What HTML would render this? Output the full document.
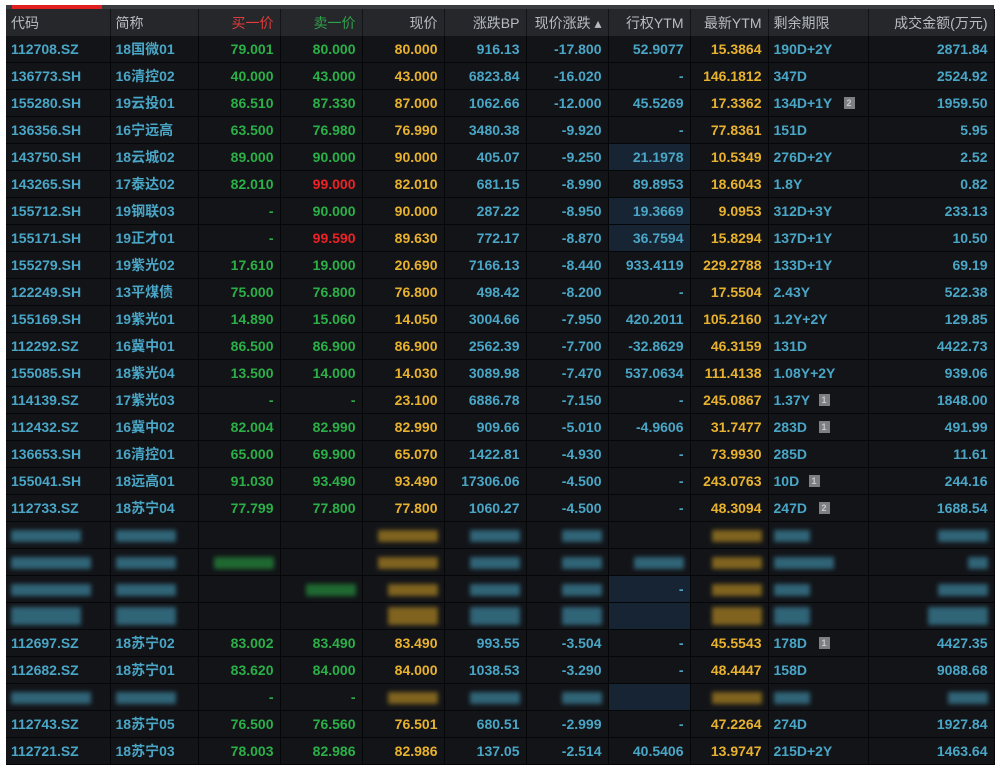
<!DOCTYPE html>
<html><head><meta charset="utf-8"><style>
body{margin:0;width:1000px;height:774px;background:#fff;overflow:hidden;position:relative;font-family:"Liberation Sans","Noto Sans CJK SC",sans-serif;}
#top{position:absolute;left:6px;top:5px;width:988px;height:4px;background:#3a3c40}
#red{position:absolute;left:12px;top:5px;width:90px;height:4px;background:#e0201f}
table{position:absolute;left:6px;top:9px;width:988px;border-collapse:collapse;table-layout:fixed;background:#121418}
th{height:27px;background:#25272b;color:#b8bcc2;font-weight:normal;font-size:14px;text-align:right;padding:0 6px 0 4px;border-right:1px solid #121418;white-space:nowrap}
td{height:26px;border-bottom:1px solid #050607;border-right:1px solid #050607;font-size:14px;font-weight:bold;text-align:right;padding:0 6px 0 4px;color:#4aa6c6;white-space:nowrap;overflow:hidden;position:relative}
th.l,td.l{text-align:left;padding-left:5px;padding-right:0}
.g{color:#2bb047}.y{color:#e9b22e}.r{color:#ee2224}.hr{color:#e33b3b}.hg{color:#2fa24a}
.b{display:inline-block;width:11px;height:12px;background:#7d7f83;color:#c8c8c8;font-size:9px;line-height:12px;text-align:center;position:absolute;left:50px;top:7px;font-weight:bold}
.hl{background:#172433}
.bl span{display:inline-block;height:12px;vertical-align:middle;opacity:.55;filter:blur(2.5px)}
.sb{background:#4aa6c6}.sy{background:#d9a526}.sg{background:#2bb047}
</style></head><body>
<div id="top"></div><div id="red"></div>
<table>
<colgroup><col style="width:104px"><col style="width:88px"><col style="width:82px"><col style="width:82px"><col style="width:82px"><col style="width:82px"><col style="width:82px"><col style="width:82px"><col style="width:78px"><col style="width:100px"><col style="width:126px"></colgroup>
<tr><th class="l">代码</th><th class="l">简称</th><th class="hr">买一价</th><th class="hg">卖一价</th><th>现价</th><th>涨跌BP</th><th>现价涨跌 ▴</th><th>行权YTM</th><th>最新YTM</th><th class="l">剩余期限</th><th>成交金额(万元)</th></tr>
<tr><td class="l">112708.SZ</td><td class="l">18国微01</td><td class="g">79.001</td><td class="g">80.000</td><td class="y">80.000</td><td>916.13</td><td>-17.800</td><td>52.9077</td><td class="y">15.3864</td><td class="l">190D+2Y</td><td>2871.84</td></tr>
<tr><td class="l">136773.SH</td><td class="l">16清控02</td><td class="g">40.000</td><td class="g">43.000</td><td class="y">43.000</td><td>6823.84</td><td>-16.020</td><td>-</td><td class="y">146.1812</td><td class="l">347D</td><td>2524.92</td></tr>
<tr><td class="l">155280.SH</td><td class="l">19云投01</td><td class="g">86.510</td><td class="g">87.330</td><td class="y">87.000</td><td>1062.66</td><td>-12.000</td><td>45.5269</td><td class="y">17.3362</td><td class="l">134D+1Y<span class="b" style="left:75px">2</span></td><td>1959.50</td></tr>
<tr><td class="l">136356.SH</td><td class="l">16宁远高</td><td class="g">63.500</td><td class="g">76.980</td><td class="y">76.990</td><td>3480.38</td><td>-9.920</td><td>-</td><td class="y">77.8361</td><td class="l">151D</td><td>5.95</td></tr>
<tr><td class="l">143750.SH</td><td class="l">18云城02</td><td class="g">89.000</td><td class="g">90.000</td><td class="y">90.000</td><td>405.07</td><td>-9.250</td><td class="hl">21.1978</td><td class="y">10.5349</td><td class="l">276D+2Y</td><td>2.52</td></tr>
<tr><td class="l">143265.SH</td><td class="l">17泰达02</td><td class="g">82.010</td><td class="r">99.000</td><td class="y">82.010</td><td>681.15</td><td>-8.990</td><td>89.8953</td><td class="y">18.6043</td><td class="l">1.8Y</td><td>0.82</td></tr>
<tr><td class="l">155712.SH</td><td class="l">19钢联03</td><td class="g">-</td><td class="g">90.000</td><td class="y">90.000</td><td>287.22</td><td>-8.950</td><td class="hl">19.3669</td><td class="y">9.0953</td><td class="l">312D+3Y</td><td>233.13</td></tr>
<tr><td class="l">155171.SH</td><td class="l">19正才01</td><td class="g">-</td><td class="r">99.590</td><td class="y">89.630</td><td>772.17</td><td>-8.870</td><td class="hl">36.7594</td><td class="y">15.8294</td><td class="l">137D+1Y</td><td>10.50</td></tr>
<tr><td class="l">155279.SH</td><td class="l">19紫光02</td><td class="g">17.610</td><td class="g">19.000</td><td class="y">20.690</td><td>7166.13</td><td>-8.440</td><td>933.4119</td><td class="y">229.2788</td><td class="l">133D+1Y</td><td>69.19</td></tr>
<tr><td class="l">122249.SH</td><td class="l">13平煤债</td><td class="g">75.000</td><td class="g">76.800</td><td class="y">76.800</td><td>498.42</td><td>-8.200</td><td>-</td><td class="y">17.5504</td><td class="l">2.43Y</td><td>522.38</td></tr>
<tr><td class="l">155169.SH</td><td class="l">19紫光01</td><td class="g">14.890</td><td class="g">15.060</td><td class="y">14.050</td><td>3004.66</td><td>-7.950</td><td>420.2011</td><td class="y">105.2160</td><td class="l">1.2Y+2Y</td><td>129.85</td></tr>
<tr><td class="l">112292.SZ</td><td class="l">16冀中01</td><td class="g">86.500</td><td class="g">86.900</td><td class="y">86.900</td><td>2562.39</td><td>-7.700</td><td>-32.8629</td><td class="y">46.3159</td><td class="l">131D</td><td>4422.73</td></tr>
<tr><td class="l">155085.SH</td><td class="l">18紫光04</td><td class="g">13.500</td><td class="g">14.000</td><td class="y">14.030</td><td>3089.98</td><td>-7.470</td><td>537.0634</td><td class="y">111.4138</td><td class="l">1.08Y+2Y</td><td>939.06</td></tr>
<tr><td class="l">114139.SZ</td><td class="l">17紫光03</td><td class="g">-</td><td class="g">-</td><td class="y">23.100</td><td>6886.78</td><td>-7.150</td><td>-</td><td class="y">245.0867</td><td class="l">1.37Y<span class="b">1</span></td><td>1848.00</td></tr>
<tr><td class="l">112432.SZ</td><td class="l">16冀中02</td><td class="g">82.004</td><td class="g">82.990</td><td class="y">82.990</td><td>909.66</td><td>-5.010</td><td>-4.9606</td><td class="y">31.7477</td><td class="l">283D<span class="b">1</span></td><td>491.99</td></tr>
<tr><td class="l">136653.SH</td><td class="l">16清控01</td><td class="g">65.000</td><td class="g">69.900</td><td class="y">65.070</td><td>1422.81</td><td>-4.930</td><td>-</td><td class="y">73.9930</td><td class="l">285D</td><td>11.61</td></tr>
<tr><td class="l">155041.SH</td><td class="l">18远高01</td><td class="g">91.030</td><td class="g">93.490</td><td class="y">93.490</td><td>17306.06</td><td>-4.500</td><td>-</td><td class="y">243.0763</td><td class="l">10D<span class="b" style="left:40px">1</span></td><td>244.16</td></tr>
<tr><td class="l">112733.SZ</td><td class="l">18苏宁04</td><td class="g">77.799</td><td class="g">77.800</td><td class="y">77.800</td><td>1060.27</td><td>-4.500</td><td>-</td><td class="y">48.3094</td><td class="l">247D<span class="b">2</span></td><td>1688.54</td></tr>
<tr class="bl"><td class="l"><span class="sb" style="width:70px"></span></td><td class="l"><span class="sb" style="width:60px"></span></td><td></td><td></td><td><span class="sy" style="width:60px"></span></td><td><span class="sb" style="width:50px"></span></td><td><span class="sb" style="width:40px"></span></td><td></td><td><span class="sy" style="width:50px"></span></td><td class="l"><span class="sb" style="width:36px"></span></td><td><span class="sb" style="width:50px"></span></td></tr>
<tr class="bl"><td class="l"><span class="sb" style="width:80px"></span></td><td class="l"><span class="sb" style="width:60px"></span></td><td><span class="sg" style="width:60px"></span></td><td></td><td><span class="sy" style="width:60px"></span></td><td><span class="sb" style="width:50px"></span></td><td><span class="sb" style="width:40px"></span></td><td><span class="sb" style="width:50px"></span></td><td><span class="sy" style="width:50px"></span></td><td class="l"><span class="sb" style="width:60px"></span></td><td><span class="sb" style="width:20px"></span></td></tr>
<tr class="bl"><td class="l"><span class="sb" style="width:80px"></span></td><td class="l"><span class="sb" style="width:60px"></span></td><td></td><td><span class="sg" style="width:50px"></span></td><td><span class="sy" style="width:50px"></span></td><td><span class="sb" style="width:50px"></span></td><td><span class="sb" style="width:40px"></span></td><td class="hl">-</td><td><span class="sy" style="width:50px"></span></td><td class="l"><span class="sb" style="width:36px"></span></td><td><span class="sb" style="width:50px"></span></td></tr>
<tr class="bl"><td class="l"><span class="sb" style="width:70px;height:18px"></span></td><td class="l"><span class="sb" style="width:60px;height:18px"></span></td><td></td><td></td><td><span class="sy" style="width:50px;height:18px"></span></td><td><span class="sb" style="width:50px;height:18px"></span></td><td><span class="sb" style="width:40px;height:18px"></span></td><td class="hl"></td><td><span class="sy" style="width:50px;height:18px"></span></td><td class="l"><span class="sb" style="width:36px;height:18px"></span></td><td><span class="sb" style="width:60px;height:18px"></span></td></tr>
<tr><td class="l">112697.SZ</td><td class="l">18苏宁02</td><td class="g">83.002</td><td class="g">83.490</td><td class="y">83.490</td><td>993.55</td><td>-3.504</td><td>-</td><td class="y">45.5543</td><td class="l">178D<span class="b">1</span></td><td>4427.35</td></tr>
<tr><td class="l">112682.SZ</td><td class="l">18苏宁01</td><td class="g">83.620</td><td class="g">84.000</td><td class="y">84.000</td><td>1038.53</td><td>-3.290</td><td>-</td><td class="y">48.4447</td><td class="l">158D</td><td>9088.68</td></tr>
<tr class="bl"><td class="l"><span class="sb" style="width:80px"></span></td><td class="l"><span class="sb" style="width:60px"></span></td><td class="g">-</td><td class="g">-</td><td><span class="sy" style="width:50px"></span></td><td><span class="sb" style="width:50px"></span></td><td><span class="sb" style="width:40px"></span></td><td class="hl"></td><td><span class="sy" style="width:50px"></span></td><td class="l"><span class="sb" style="width:36px"></span></td><td><span class="sb" style="width:40px"></span></td></tr>
<tr><td class="l">112743.SZ</td><td class="l">18苏宁05</td><td class="g">76.500</td><td class="g">76.560</td><td class="y">76.501</td><td>680.51</td><td>-2.999</td><td>-</td><td class="y">47.2264</td><td class="l">274D</td><td>1927.84</td></tr>
<tr><td class="l">112721.SZ</td><td class="l">18苏宁03</td><td class="g">78.003</td><td class="g">82.986</td><td class="y">82.986</td><td>137.05</td><td>-2.514</td><td>40.5406</td><td class="y">13.9747</td><td class="l">215D+2Y</td><td>1463.64</td></tr>
</table>
</body></html>
